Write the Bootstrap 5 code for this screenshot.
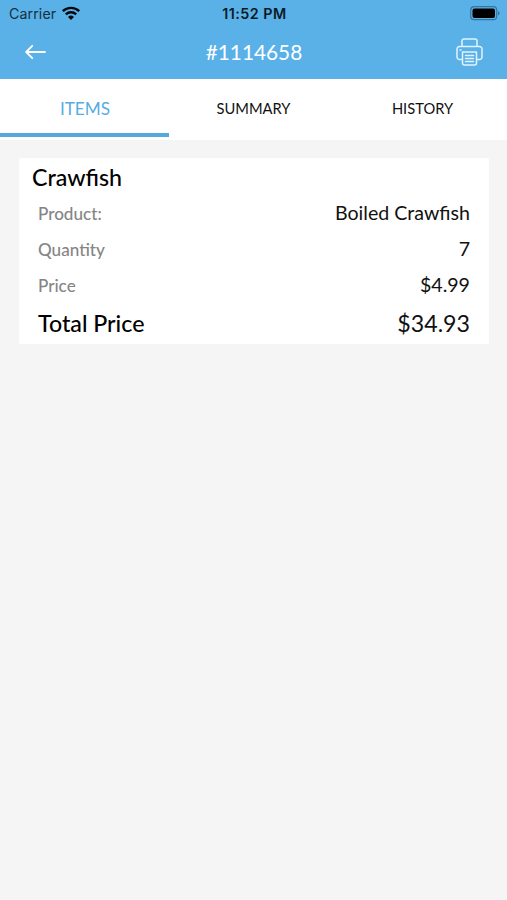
<!DOCTYPE html>
<html lang="en">
<head>
<meta charset="utf-8">
<meta name="viewport" content="width=device-width, initial-scale=1">
<title>Order #1114658</title>
<link href="https://cdn.jsdelivr.net/npm/bootstrap@5.3.0/dist/css/bootstrap.min.css" rel="stylesheet">
<style>
body { background: #f5f5f5; color: #111; font-family: Lato, "Liberation Sans", sans-serif; line-height: 1; }
.app-top { background: #5ab1e8; height: 79px; }
.status-bar { height: 27px; padding: 0 7px 0 9px; font-family: Inter, "Liberation Sans", sans-serif; color: #0b1a24; }
.carrier { font-size: 14.2px; color: #14303f; letter-spacing: .1px; padding-top: 1px; }
.carrier svg { margin: 0 0 1px 5px; }
.clock { font-size: 14.3px; font-weight: 600; letter-spacing: .5px; padding-top: 2px; }
.title-bar { height: 50px; padding: 0 24px 0 25px; }
.order-no { font-size: 20.8px; }
.order-tabs { height: 61px; padding-bottom: 3px; }
.order-tabs .nav-link { height: 58px; color: #111; font-size: 14.7px; border-radius: 0; border-bottom: 4px solid transparent; padding: 5px 0 0; }
.order-tabs .nav-link.active { color: #58acdf; font-size: 17.2px; border-bottom-color: #55a9dc; padding: 6px 0 0 1px; }
.item-card { margin: 18px 18px 0 19px; height: 186px; border-radius: 2px; padding: 1px 19px 0; }
.item-name { font-size: 23.2px; font-weight: 500; height: 37px; margin-left: -6px; padding-top: 1px; color: #000; }
.item-row { height: 36px; font-size: 19.6px; }
.item-row dd { padding-bottom: 2px; }
.item-row dt { font-size: 17.1px; font-weight: 500; color: #858585; }
.item-total { height: 39px; font-size: 23.2px; }
.item-total dt { font-weight: 500; color: #000; }
</style>
<script src="https://cdn.jsdelivr.net/npm/bootstrap@5.3.0/dist/js/bootstrap.bundle.min.js"></script>
</head>
<body>
<header class="app-top">
  <div class="status-bar row g-0 align-items-center">
    <div class="col carrier d-flex align-items-center">Carrier
      <svg width="20" height="15" viewBox="0 0 20 15" fill="none" stroke="#05090c" stroke-width="2.4"><path d="M1.8 5.2a11.8 11.8 0 0 1 16.4 0M4.8 8.3a7.5 7.5 0 0 1 10.4 0"/><path d="M10 14l-3-3a4.3 4.3 0 0 1 6 0z" fill="#05090c" stroke="none"/></svg>
    </div>
    <div class="col-auto clock">11:52 PM</div>
    <div class="col d-flex justify-content-end">
      <svg width="30" height="15" viewBox="0 0 30 15"><rect x=".7" y=".7" width="26" height="13" rx="3.5" fill="none" stroke="#34769d" stroke-width="1.2"/><rect x="2.5" y="2.5" width="22.5" height="9.5" rx="2" fill="#000"/><path d="M28 5q3 2.2 0 4.6z" fill="#34769d"/></svg>
    </div>
  </div>
  <div class="title-bar row g-0 align-items-center text-white">
    <div class="col d-flex"><svg width="22" height="16" viewBox="0 0 22 16" fill="none" stroke="#fff" stroke-width="1.8" stroke-linecap="round" stroke-linejoin="round"><path d="M20 8H1.5M7.2 1.8L1.2 8l6 6.2"/></svg></div>
    <h1 class="col-auto order-no fw-normal m-0">#1114658</h1>
    <div class="col d-flex justify-content-end"><svg width="27" height="28" viewBox="0 0 27 28" fill="none" stroke="#e0f3ff" stroke-width="1.5" stroke-linejoin="round" stroke-linecap="round"><path d="M6 8V3a2 2 0 0 1 2-2h11a2 2 0 0 1 2 2v5M6 21.5H3.500a2.500 2.500 0 0 1-2.500-2.500v-8a2.500 2.500 0 0 1 2.500-2.500h20a2.500 2.500 0 0 1 2.500 2.500v8a2.500 2.500 0 0 1-2.500 2.500H21"/><path d="M6.500 14h14v11a2 2 0 0 1-2 2h-10a2 2 0 0 1-2-2zM9.500 17.500h8M9.500 20.500h8M9.500 23.500h8M4 12h1"/></svg></div>
  </div>
</header>
<nav class="order-tabs bg-white">
  <div class="nav nav-fill row g-0">
    <a class="col-4 nav-link active d-flex align-items-center justify-content-center" href="#">ITEMS</a>
    <a class="col-4 nav-link d-flex align-items-center justify-content-center" href="#">SUMMARY</a>
    <a class="col-4 nav-link d-flex align-items-center justify-content-center" href="#">HISTORY</a>
  </div>
</nav>
<main class="item-card bg-white">
  <h2 class="item-name d-flex align-items-center mb-0">Crawfish</h2>
  <dl class="m-0">
    <div class="item-row d-flex justify-content-between align-items-center"><dt>Product:</dt><dd class="m-0">Boiled Crawfish</dd></div>
    <div class="item-row d-flex justify-content-between align-items-center"><dt>Quantity</dt><dd class="m-0">7</dd></div>
    <div class="item-row d-flex justify-content-between align-items-center"><dt>Price</dt><dd class="m-0">$4.99</dd></div>
    <div class="item-total d-flex justify-content-between align-items-center"><dt>Total Price</dt><dd class="m-0">$34.93</dd></div>
  </dl>
</main>
</body>
</html>
